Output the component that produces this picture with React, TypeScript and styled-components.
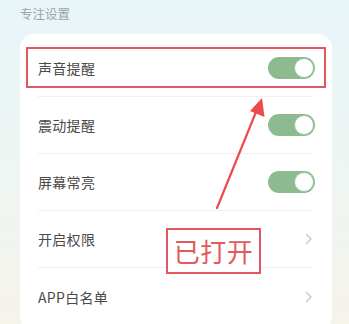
import React from "react";
import styled, { createGlobalStyle } from "styled-components";

const GlobalStyle = createGlobalStyle`
  html, body {
    margin: 0;
    padding: 0;
  }
  body {
    width: 349px;
    height: 324px;
    overflow: hidden;
    font-family: "Noto Sans CJK SC", "Noto Sans", sans-serif;
    background: linear-gradient(180deg, #e8f5f8 0%, #eef5f2 55%, #f5f3ea 100%);
  }
`;

const Page = styled.div`
  position: relative;
  width: 349px;
  height: 324px;
  padding: 0 17px 0 20px;
  box-sizing: border-box;
`;

const SectionTitle = styled.div`
  height: 34px;
  padding-top: 5px;
  box-sizing: border-box;
  font-size: 12.5px;
  line-height: 18px;
  color: #9aa3a6;
`;

const Card = styled.div`
  position: relative;
  background: #ffffff;
  border-radius: 14px;
  padding: 6px 19px 6px 18px;
`;

const Row = styled.div<{ $last?: boolean }>`
  height: 57px;
  display: flex;
  align-items: center;
  justify-content: space-between;
  border-bottom: ${(p) => (p.$last ? "none" : "1px solid #f0f0f0")};
  box-sizing: border-box;
`;

const Label = styled.span`
  font-size: 14px;
  color: #4a4a4a;
  letter-spacing: 0.3px;
`;

const Toggle = styled.div`
  position: relative;
  width: 47px;
  height: 22px;
  border-radius: 11px;
  background: #8dbb8f;
  margin-right: -2px;
`;

const Knob = styled.div`
  position: absolute;
  right: 1px;
  top: 1px;
  width: 20px;
  height: 20px;
  box-sizing: border-box;
  border-radius: 50%;
  background: #ffffff;
  border: 1.5px solid #9cc59e;
`;

const Chevron = styled.svg`
  width: 8px;
  height: 12px;
`;

const HighlightBox = styled.div`
  position: absolute;
  left: 26px;
  top: 47px;
  width: 300px;
  height: 41px;
  box-sizing: border-box;
  border: 2px solid #e2575b;
  pointer-events: none;
`;

const Callout = styled.div`
  position: absolute;
  left: 166px;
  top: 228px;
  width: 95px;
  height: 46px;
  box-sizing: border-box;
  border: 2px solid #e2575b;
  background: rgba(255, 255, 255, 0.85);
  color: #e25a5e;
  font-size: 26px;
  line-height: 42px;
  text-align: center;
  letter-spacing: 0.5px;
`;

const Arrow = styled.svg`
  position: absolute;
  left: 0;
  top: 0;
  pointer-events: none;
`;

const items: { label: string; kind: "toggle" | "link" }[] = [
  { label: "声音提醒", kind: "toggle" },
  { label: "震动提醒", kind: "toggle" },
  { label: "屏幕常亮", kind: "toggle" },
  { label: "开启权限", kind: "link" },
  { label: "APP白名单", kind: "link" },
];

export default function App() {
  return (
    <>
      <GlobalStyle />
      <Page>
        <SectionTitle>专注设置</SectionTitle>
        <Card>
          {items.map((item, i) => (
            <Row key={item.label} $last={i === items.length - 1}>
              <Label>{item.label}</Label>
              {item.kind === "toggle" ? (
                <Toggle>
                  <Knob />
                </Toggle>
              ) : (
                <Chevron viewBox="0 0 8 12">
                  <path
                    d="M1.5 1.5 L6 6 L1.5 10.5"
                    fill="none"
                    stroke="#c4c4c4"
                    strokeWidth="1.3"
                    strokeLinecap="round"
                    strokeLinejoin="round"
                  />
                </Chevron>
              )}
            </Row>
          ))}
        </Card>
        <HighlightBox />
        <Arrow width="349" height="324" viewBox="0 0 349 324">
          <line
            x1="217"
            y1="208"
            x2="256"
            y2="112"
            stroke="#ec4b4b"
            strokeWidth="2.2"
            strokeLinecap="round"
          />
          <polygon points="262,98 264.5,117 250,111" fill="#ec4b4b" />
        </Arrow>
        <Callout>已打开</Callout>
      </Page>
    </>
  );
}
